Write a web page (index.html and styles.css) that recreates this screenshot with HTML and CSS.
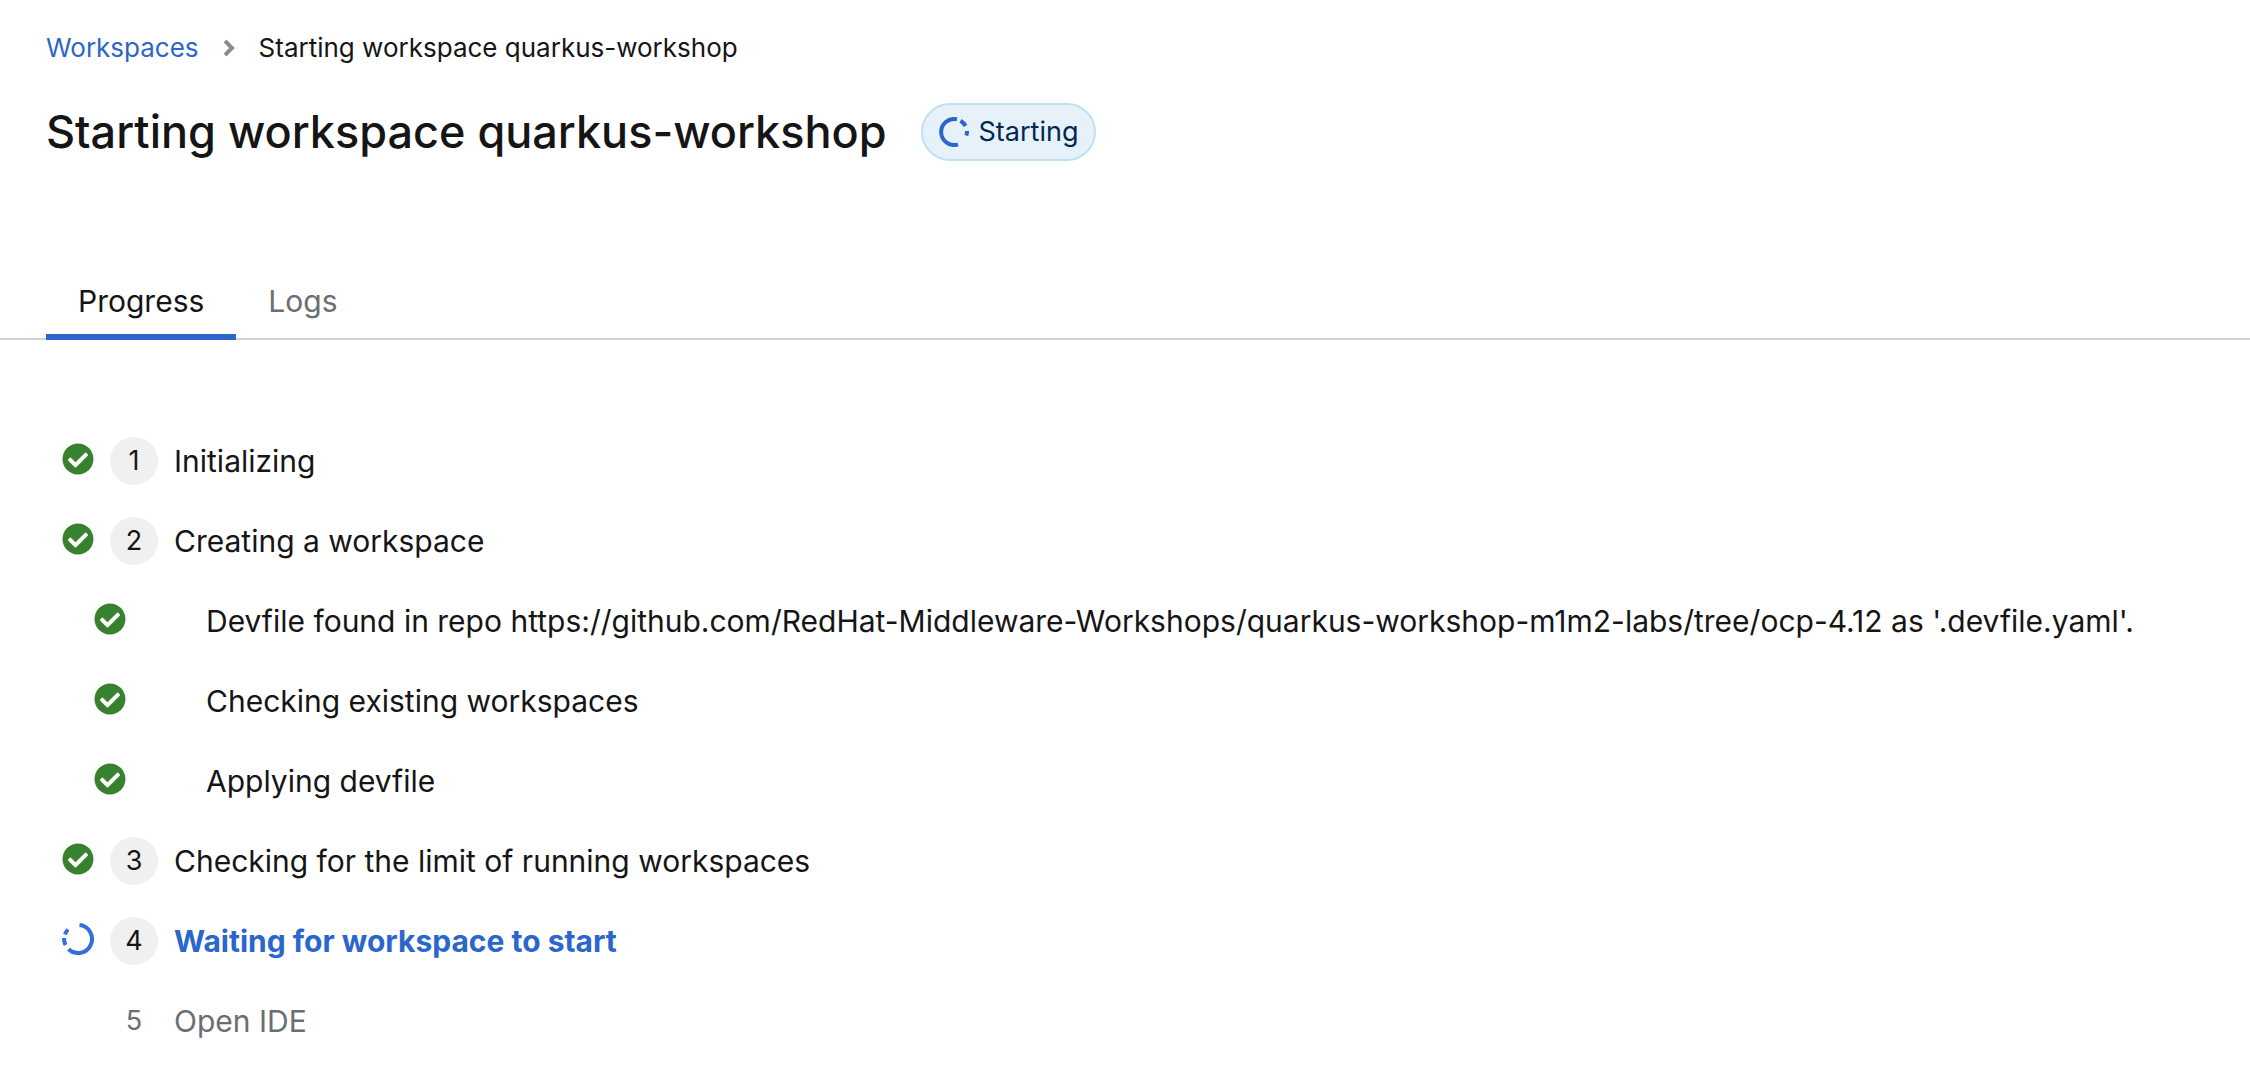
FILE: index.html
```html
<!DOCTYPE html>
<html lang="en">
<head>
<meta charset="utf-8">
<title>Starting workspace quarkus-workshop</title>
<link rel="stylesheet" href="styles.css">
</head>
<body>
<svg class="sprite" aria-hidden="true">
  <symbol id="check" viewBox="0 0 512 512">
    <path fill="currentColor" d="M504 256c0 136.967-111.033 248-248 248S8 392.967 8 256 119.033 8 256 8s248 111.033 248 248zM227.314 387.314l184-184c6.248-6.248 6.248-16.379 0-22.627l-22.627-22.627c-6.248-6.249-16.379-6.249-22.628 0L216 308.118l-70.059-70.059c-6.248-6.248-16.379-6.248-22.628 0l-22.627 22.627c-6.248 6.248-6.248 16.379 0 22.627l104 104c6.249 6.249 16.379 6.249 22.628.001z"/>
  </symbol>
</svg>
<header class="header">
  <nav aria-label="Breadcrumb">
    <ol class="breadcrumb">
      <li><a href="#workspaces">Workspaces</a></li>
      <li class="crumb">
        <svg class="chevron" viewBox="0 0 12 18" aria-hidden="true"><path d="M2 2l7 7-7 7" fill="none" stroke="currentColor" stroke-width="4"/></svg>
        <span aria-current="page">Starting workspace quarkus-workshop</span>
      </li>
    </ol>
  </nav>
  <div class="title-row">
    <h1>Starting workspace quarkus-workshop</h1>
    <span class="status">
      <svg class="status-icon" viewBox="0 0 30 30" fill="none" stroke="currentColor" stroke-width="4" aria-hidden="true"><path d="M18 2.300A13 13 0 1 0 19 27.400M21.500 3.700A13 13 0 0 1 26.500 9M28 14A13 13 0 0 1 27.300 18.500"/></svg>
      <span>Starting</span>
    </span>
  </div>
</header>
<div class="tabs" role="tablist">
  <button class="tab selected" type="button" role="tab" aria-selected="true">Progress</button>
  <button class="tab" type="button" role="tab" aria-selected="false">Logs</button>
</div>
<main>
  <ol class="steps">
    <li class="step"><svg class="icon"><use href="#check"/></svg><span class="number">1</span><span>Initializing</span></li>
    <li class="step"><svg class="icon"><use href="#check"/></svg><span class="number">2</span><span>Creating a workspace</span></li>
    <li class="step nested"><svg class="icon"><use href="#check"/></svg><span>Devfile found in repo https://github.com/RedHat-Middleware-Workshops/quarkus-workshop-m1m2-labs/tree/ocp-4.12 as '.devfile.yaml'.</span></li>
    <li class="step nested"><svg class="icon"><use href="#check"/></svg><span>Checking existing workspaces</span></li>
    <li class="step nested"><svg class="icon"><use href="#check"/></svg><span>Applying devfile</span></li>
    <li class="step"><svg class="icon"><use href="#check"/></svg><span class="number">3</span><span>Checking for the limit of running workspaces</span></li>
    <li class="step active"><svg class="icon" viewBox="0 0 32 32" fill="none" stroke="currentColor" stroke-width="4"><path d="M17.500 2.100A14 14 0 1 1 6.500 26.300M3.600 22A14 14 0 0 1 2 15M3 11.500A14 14 0 0 1 6 6.500"/></svg><span class="number">4</span><span>Waiting for workspace to start</span></li>
    <li class="step pending"><span class="number">5</span><span>Open IDE</span></li>
  </ol>
</main>
</body>
</html>
```
FILE: styles.css
```css
* { box-sizing: border-box; }

body {
  margin: 0;
  background: #fff;
  color: #151515;
  font: 30px/48px Inter, sans-serif;
}

.sprite { display: none; }

ol {
  margin: 0;
  padding: 0;
  list-style: none;
}

.header { padding: 24px 46px 0; }

.breadcrumb {
  display: flex;
  gap: 24px;
  font-size: 26px;
}

.breadcrumb a {
  color: #2b66cc;
  text-decoration: none;
}

.crumb {
  display: flex;
  align-items: center;
  gap: 24px;
}

.chevron {
  width: 12px;
  height: 18px;
  color: #8a8d90;
}

.title-row {
  display: flex;
  align-items: center;
  gap: 34px;
  margin-top: 30px;
}

h1 {
  margin: 0;
  font-size: 45px;
  font-weight: 500;
  line-height: 60px;
}

.status {
  display: flex;
  align-items: center;
  gap: 10px;
  height: 58px;
  padding: 0 16px;
  border: 2px solid #bee1f4;
  border-radius: 29px;
  background: #e7f1fa;
  color: #002952;
  font-size: 27px;
}

.status-icon {
  width: 30px;
  height: 30px;
  color: #2b66cc;
}

.tabs {
  display: flex;
  margin-top: 108px;
  padding: 0 46px;
  box-shadow: inset 0 -2px #d2d2d2;
}

.tab {
  height: 70px;
  padding: 0 32px 2px;
  border: 0;
  border-bottom: 6px solid transparent;
  background: none;
  color: #6a6e73;
  font: inherit;
}

.tab.selected {
  border-color: #2b66cc;
  color: #151515;
}

.steps {
  display: grid;
  gap: 32px;
  padding: 97px 62px 24px;
}

.step {
  display: grid;
  grid-template-columns: 32px 48px 1fr;
  column-gap: 16px;
  align-items: center;
}

.step > :last-child { grid-column: 3; }

.nested { padding-left: 32px; }

.icon {
  width: 32px;
  height: 32px;
  margin-bottom: 4px;
  color: #38812f;
}

.number {
  grid-column: 2;
  border-radius: 50%;
  background: #f0f0f0;
  color: #151515;
  font-size: 27px;
  font-weight: 400;
  text-align: center;
}

.active {
  color: #2b66cc;
  font-weight: 700;
}

.active .icon { color: #2f6fde; }

.pending,
.pending .number { color: #6a6e73; }

.pending .number { background: none; }
```
